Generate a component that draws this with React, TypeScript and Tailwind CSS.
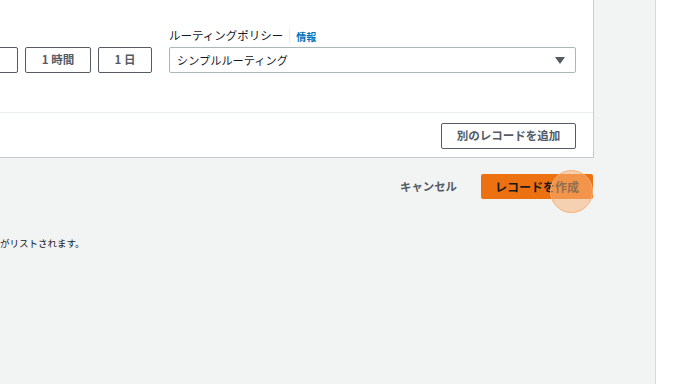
const jp = { fontFamily: '"Noto Sans CJK JP", "Noto Sans", sans-serif' };

const TtlButton = ({ label, w }: { label: string; w: string }) => (
    <button className={`${w} h-[26px] shrink-0 border border-[#545b64] rounded-[2px] bg-white text-[11.5px] font-[700] text-[#545b64] flex items-center justify-center`}>
        {label}
    </button>
);

const App = () => {
    return (
        <div style={jp} className="w-[688px] h-[384px] flex overflow-hidden bg-white">
            <div className="w-[656px] h-full shrink-0 bg-[#f2f3f3] border-r border-[#d5dbdb] flex flex-col">
                <div className="w-[594px] h-[158px] bg-white border-r border-b border-[#c6cccd] flex flex-col">
                    <div className="h-[113px] border-b border-[#eaeded] flex items-end pb-[39px] pr-[17px]">
                        <div className="flex items-end gap-[7px] ml-[-46px]">
                            <TtlButton label="15 分" w="w-[64px]" />
                            <TtlButton label="1 時間" w="w-[66px]" />
                            <TtlButton label="1 日" w="w-[54px]" />
                        </div>
                        <div className="ml-[17px] flex-1 flex flex-col">
                            <div className="flex items-center h-[20px] mb-[1px] text-[11.5px] text-[#16191f]">
                                <span>ルーティングポリシー</span>
                                <span className="mx-[6px] h-[14px] w-px bg-[#eaeded]" />
                                <span className="text-[10px] font-[700] text-[#0073bb]">情報</span>
                            </div>
                            <div className="h-[26px] border border-[#aab7b8] rounded-[2px] flex items-center justify-between pl-[7px] pr-[10px] text-[11.2px] text-[#16191f]">
                                <span>シンプルルーティング</span>
                                <svg width="10" height="7" viewBox="0 0 10 7">
                                    <path d="M0 0 L10 0 L5 7 Z" fill="#545b64" />
                                </svg>
                            </div>
                        </div>
                    </div>
                    <div className="flex-1 flex items-start justify-end pt-[10px] pr-[17px]">
                        <button className="w-[135px] h-[26px] border border-[#545b64] rounded-[2px] bg-white text-[11.5px] font-[700] text-[#545b64] flex items-center justify-center">
                            別のレコードを追加
                        </button>
                    </div>
                </div>
                <div className="w-[593px] flex items-center justify-end gap-[24px] mt-[16px]">
                    <span className="text-[11.4px] font-[700] text-[#545b64]">キャンセル</span>
                    <div className="relative">
                        <button className="w-[112px] h-[25px] rounded-[2px] bg-[#ec7211] text-[12px] font-[700] text-[#16191f] flex items-center justify-center">
                            レコードを作成
                        </button>
                        <span className="absolute left-[69px] top-[-4px] w-[43px] h-[43px] rounded-full bg-[#f7b27a]/55 border border-[#f4b27a]" />
                    </div>
                </div>
                <div className="mt-[37px] text-[9.5px] text-[#16191f]">がリストされます。</div>
            </div>
            <div className="flex-1" />
        </div>
    );
};

export default App;
